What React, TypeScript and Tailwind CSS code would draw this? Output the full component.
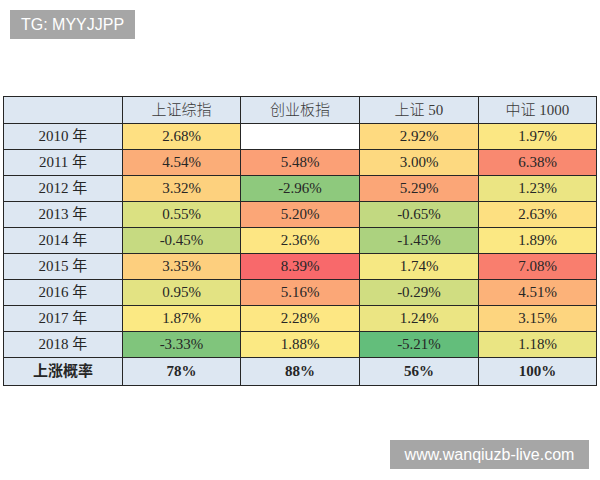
import React from "react";

type Cell = { v: string; bg: string };

const rows: { label: string; cells: Cell[] }[] = [
  { label: "2010 年", cells: [
    { v: "2.68%", bg: "bg-[#fee082]" }, { v: "", bg: "bg-white" }, { v: "2.92%", bg: "bg-[#feda80]" }, { v: "1.97%", bg: "bg-[#fbe783]" } ] },
  { label: "2011 年", cells: [
    { v: "4.54%", bg: "bg-[#fbad78]" }, { v: "5.48%", bg: "bg-[#fba076]" }, { v: "3.00%", bg: "bg-[#fdd980]" }, { v: "6.38%", bg: "bg-[#f98970]" } ] },
  { label: "2012 年", cells: [
    { v: "3.32%", bg: "bg-[#fdd17e]" }, { v: "-2.96%", bg: "bg-[#8ec97d]" }, { v: "5.29%", bg: "bg-[#fba677]" }, { v: "1.23%", bg: "bg-[#ebe583]" } ] },
  { label: "2013 年", cells: [
    { v: "0.55%", bg: "bg-[#dbe182]" }, { v: "5.20%", bg: "bg-[#fba677]" }, { v: "-0.65%", bg: "bg-[#c2d981]" }, { v: "2.63%", bg: "bg-[#fde081]" } ] },
  { label: "2014 年", cells: [
    { v: "-0.45%", bg: "bg-[#c6da81]" }, { v: "2.36%", bg: "bg-[#fde683]" }, { v: "-1.45%", bg: "bg-[#acd27f]" }, { v: "1.89%", bg: "bg-[#fbe883]" } ] },
  { label: "2015 年", cells: [
    { v: "3.35%", bg: "bg-[#fdcf7e]" }, { v: "8.39%", bg: "bg-[#f8696b]" }, { v: "1.74%", bg: "bg-[#f6e883]" }, { v: "7.08%", bg: "bg-[#f97e6e]" } ] },
  { label: "2016 年", cells: [
    { v: "0.95%", bg: "bg-[#e3e383]" }, { v: "5.16%", bg: "bg-[#fba777]" }, { v: "-0.29%", bg: "bg-[#d0dd81]" }, { v: "4.51%", bg: "bg-[#fcb279]" } ] },
  { label: "2017 年", cells: [
    { v: "1.87%", bg: "bg-[#fbe983]" }, { v: "2.28%", bg: "bg-[#fde783]" }, { v: "1.24%", bg: "bg-[#ebe583]" }, { v: "3.15%", bg: "bg-[#fdd57f]" } ] },
  { label: "2018 年", cells: [
    { v: "-3.33%", bg: "bg-[#80c57c]" }, { v: "1.88%", bg: "bg-[#fbe983]" }, { v: "-5.21%", bg: "bg-[#63be7b]" }, { v: "1.18%", bg: "bg-[#eae583]" } ] },
];

const headers = ["上证综指", "创业板指", "上证 50", "中证 1000"];
const footer = ["78%", "88%", "56%", "100%"];

const font = { fontFamily: '"Liberation Serif", "Noto Sans CJK SC", serif' };

export default function App() {
  return (
    <div className="relative w-[600px] h-[480px] bg-white overflow-hidden">
      <div className="pt-[96px] pl-[3px]">
        <table
          className="border-collapse text-[15px] text-[#262626] leading-none"
          style={font}
        >
          <colgroup>
            <col className="w-[119px]" />
            <col className="w-[118px]" />
            <col className="w-[119px]" />
            <col className="w-[119px]" />
            <col className="w-[118px]" />
          </colgroup>
          <tbody>
            <tr className="h-[27px] bg-[#dde7f2]">
              <td className="border border-[#262626] p-0"></td>
              {headers.map((h) => (
                <td key={h} className="border border-[#262626] p-0 text-center text-[#3a3a3a] font-light">
                  {h}
                </td>
              ))}
            </tr>
            {rows.map((r) => (
              <tr key={r.label} className="h-[26px]">
                <td className="border border-[#262626] p-0 text-center bg-[#dde7f2]">
                  {r.label}
                </td>
                {r.cells.map((c, i) => (
                  <td key={i} className={`border border-[#262626] p-0 text-center ${c.bg}`}>
                    {c.v}
                  </td>
                ))}
              </tr>
            ))}
            <tr className="h-[28px] bg-[#dde7f2] font-bold">
              <td className="border border-[#262626] p-0 text-center">上涨概率</td>
              {footer.map((f) => (
                <td key={f} className="border border-[#262626] p-0 text-center">
                  {f}
                </td>
              ))}
            </tr>
          </tbody>
        </table>
      </div>

      <div
        className="absolute left-[10px] top-[10px] w-[125px] h-[29px] bg-[#a6a6a6] text-white text-[16px] flex items-center justify-center"
        style={{ fontFamily: '"Liberation Sans", Arial, sans-serif' }}
      >
        TG: MYYJJPP
      </div>
      <div
        className="absolute left-[390px] top-[440px] w-[199px] h-[29px] bg-[#a6a6a6] text-white text-[16px] flex items-center justify-center"
        style={{ fontFamily: '"Liberation Sans", Arial, sans-serif' }}
      >
        www.wanqiuzb-live.com
      </div>
    </div>
  );
}
